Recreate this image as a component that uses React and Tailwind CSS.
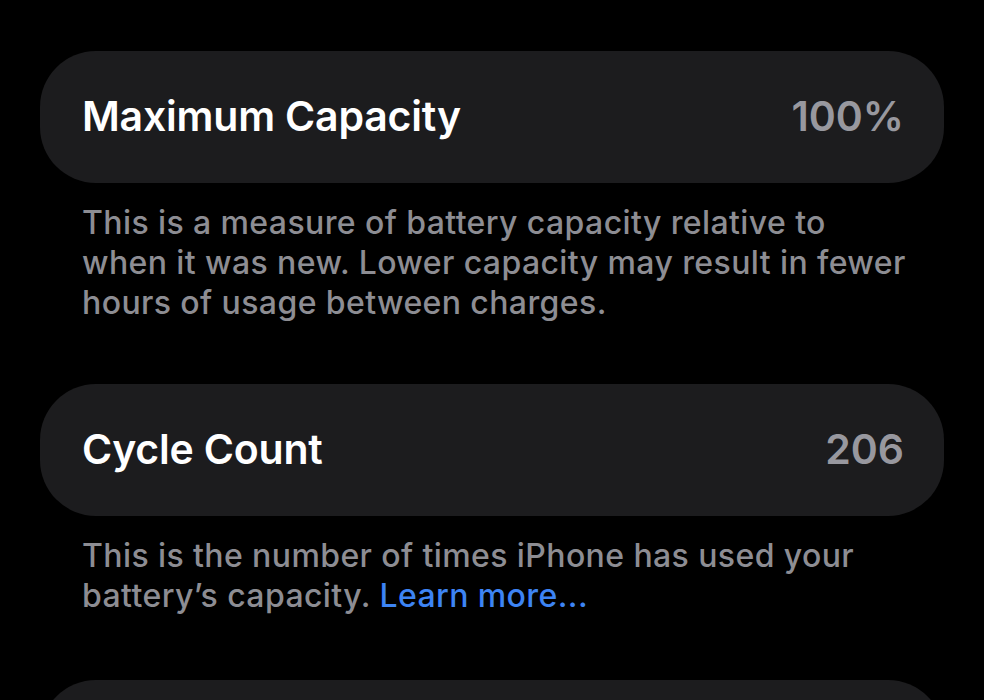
export default function App() {
  const font = { fontFamily: 'Inter, "Noto Sans", sans-serif' };
  return (
    <div className="w-[984px] h-[700px] overflow-hidden bg-black" style={font}>
      <div className="flex flex-col px-[40px] pt-[51px]">
        <div className="flex items-center justify-between h-[132px] rounded-[56px] bg-[#1c1c1e] pl-[42px] pr-[40px]">
          <span className="text-[41px] font-semibold text-white tracking-[-0.2px]">Maximum Capacity</span>
          <span className="text-[41px] font-semibold text-[#98989f]">100%</span>
        </div>
        <p className="mt-[20px] px-[42px] text-[32px] leading-[40px] font-medium text-[#8d8d93] tracking-[0.4px] whitespace-nowrap">
          This is a measure of battery capacity relative to<br />
          when it was new. Lower capacity may result in fewer<br />
          hours of usage between charges.
        </p>
        <div className="mt-[61px] flex items-center justify-between h-[132px] rounded-[56px] bg-[#1c1c1e] pl-[42px] pr-[40px]">
          <span className="text-[41px] font-semibold text-white tracking-[-0.2px]">Cycle Count</span>
          <span className="text-[41px] font-semibold text-[#98989f]">206</span>
        </div>
        <p className="mt-[20px] px-[42px] text-[32px] leading-[40px] font-medium text-[#8d8d93] tracking-[0.4px] whitespace-nowrap">
          This is the number of times iPhone has used your<br />
          battery’s capacity. <span className="text-[#3d84f4]">Learn more...</span>
        </p>
        <div className="mt-[64px] h-[132px] rounded-[56px] bg-[#1c1c1e]" />
      </div>
    </div>
  );
}
